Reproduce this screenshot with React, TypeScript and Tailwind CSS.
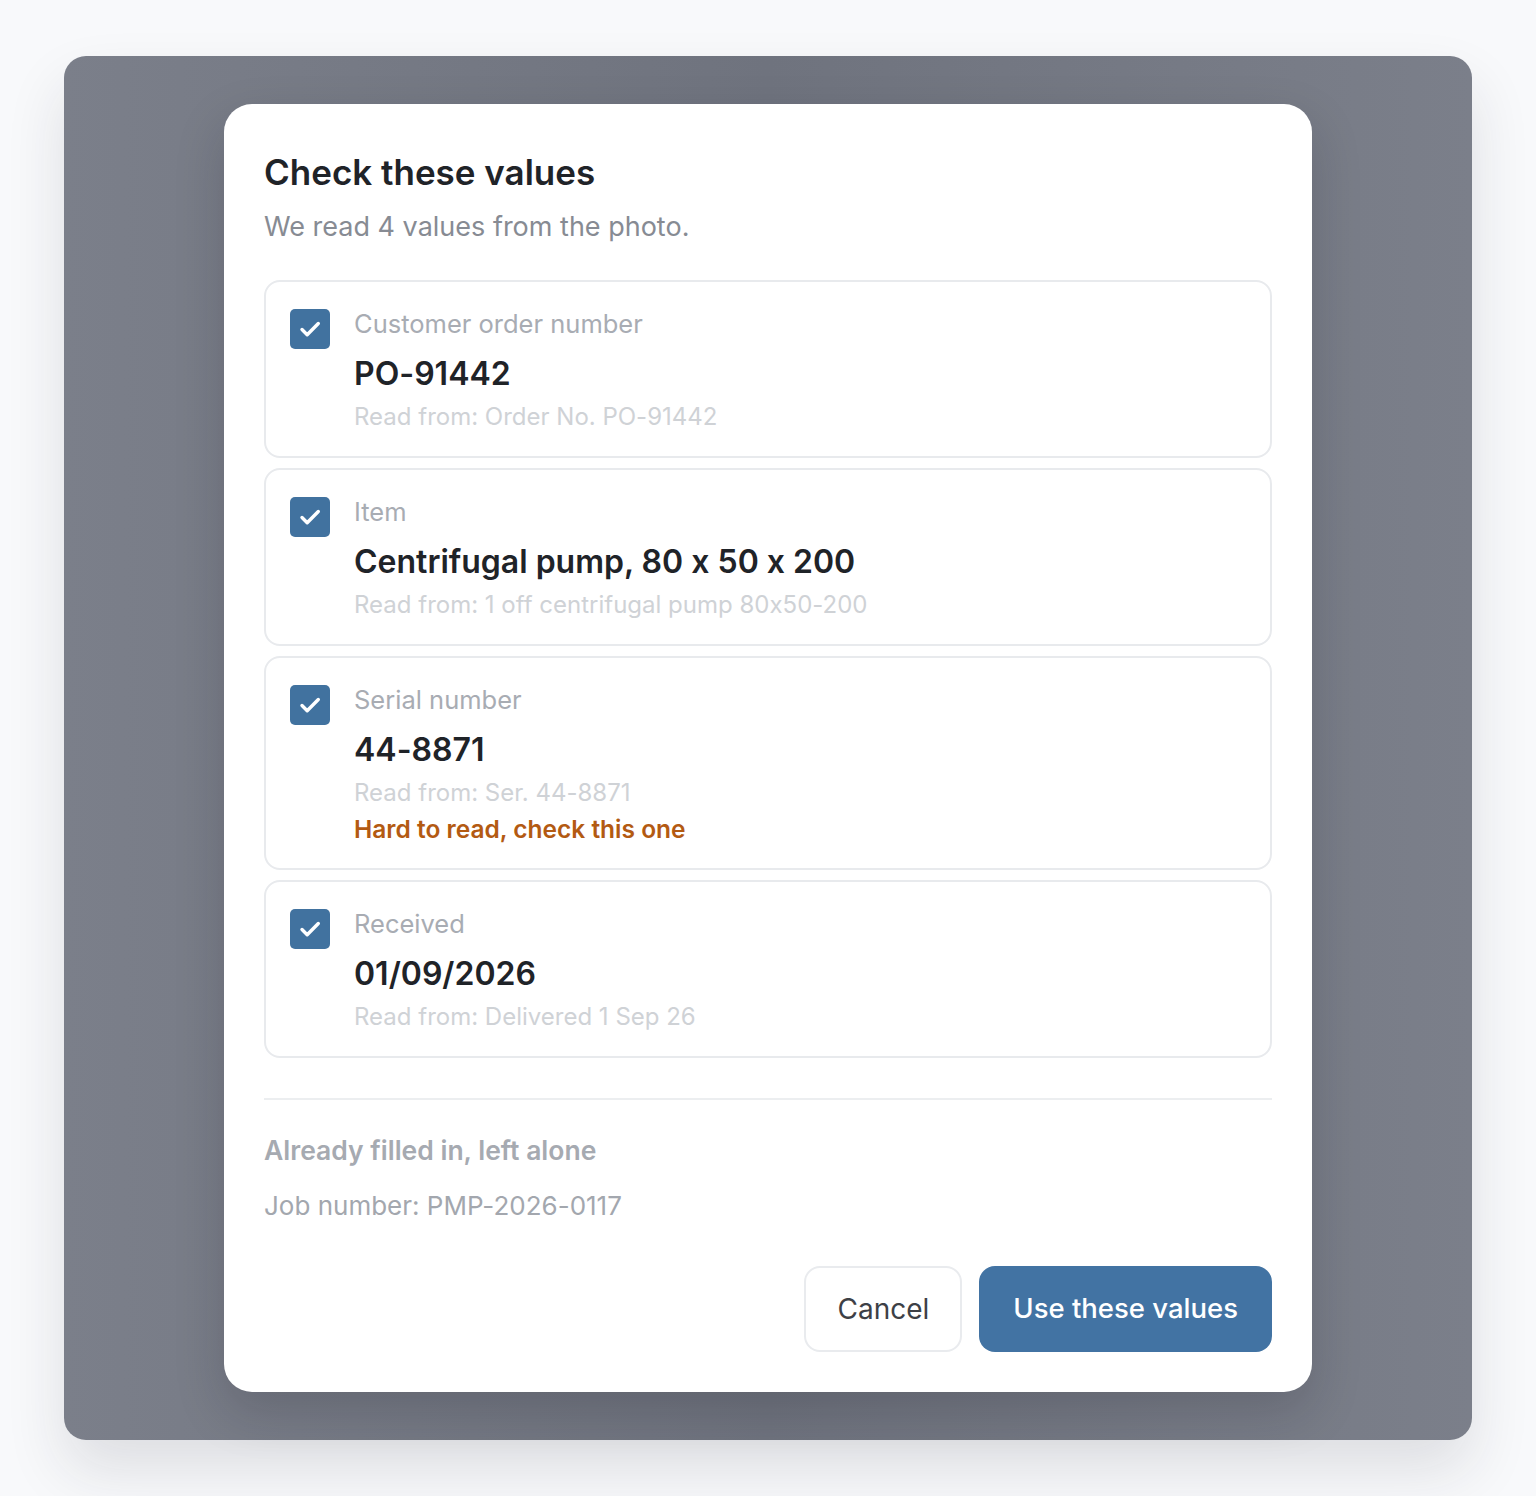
import React from 'react';

type Campo = {
  rotulo: string;
  valor: string;
  origem: string;
  aviso?: string;
};

const CAMPOS: Campo[] = [
  { rotulo: 'Customer order number', valor: 'PO-91442', origem: 'Read from: Order No. PO-91442' },
  { rotulo: 'Item', valor: 'Centrifugal pump, 80 x 50 x 200', origem: 'Read from: 1 off centrifugal pump 80x50-200' },
  { rotulo: 'Serial number', valor: '44-8871', origem: 'Read from: Ser. 44-8871', aviso: 'Hard to read, check this one' },
  { rotulo: 'Received', valor: '01/09/2026', origem: 'Read from: Delivered 1 Sep 26' },
];

const Caixa = () => (
  <div className="mt-[3px] h-10 w-10 shrink-0 rounded-[5px] bg-[#41729f]">
    <svg width="40" height="40" viewBox="0 0 40 40" fill="none">
      <path d="M12 20.5l5.2 5.2L28.3 14.5" stroke="white" strokeWidth="3.4" strokeLinecap="round" strokeLinejoin="round" />
    </svg>
  </div>
);

const LinhaCampo = ({ campo }: { campo: Campo }) => (
  <div className="flex gap-6 rounded-2xl border-2 border-[#e8eaed] bg-white px-6 pb-[22px] pt-6">
    <Caixa />
    <div className="flex flex-col">
      <div className="text-[25.5px] leading-[36px] text-[#a8acb3]">{campo.rotulo}</div>
      <div className="mt-3 text-[32px] font-semibold leading-[40px] text-[#1f2328]">{campo.valor}</div>
      <div className="mt-1.5 text-[24px] leading-[34px] text-[#cfd2d6]">{campo.origem}</div>
      {campo.aviso && (
        <div className="mt-0.5 text-[24.5px] font-semibold leading-[34px] text-[#b35a12]">{campo.aviso}</div>
      )}
    </div>
  </div>
);

export default function App() {
  return (
    <div className="min-h-[1496px] bg-[#f8f9fb] px-16 py-14 font-['Inter',sans-serif] [font-feature-settings:'calt'_0]">
      <div className="rounded-[22px] bg-gradient-to-r from-[#7b7f8a] via-[#6f737e] to-[#7b7f8a] px-40 py-12 shadow-[0_30px_60px_rgba(30,35,50,0.12)]">
        <div className="rounded-[28px] bg-white px-10 pb-10 pt-12 shadow-[0_20px_50px_rgba(20,24,36,0.18)]">
          <h2 className="text-[35px] font-semibold leading-[40px] text-[#1f2328]">Check these values</h2>
          <p className="mt-[17px] text-[27px] leading-[36px] text-[#878b93]">We read 4 values from the photo.</p>

          <div className="mt-[35px] flex flex-col gap-2.5">
            {CAMPOS.map((c) => (
              <LinhaCampo key={c.rotulo} campo={c} />
            ))}
          </div>

          <div className="mt-10 h-[2px] bg-[#eceef0]" />

          <div className="mt-8 text-[26.5px] font-semibold leading-[36px] text-[#a6aab1]">Already filled in, left alone</div>
          <div className="mt-5 text-[26px] leading-[36px] text-[#a3a7ae]">Job number: PMP-2026-0117</div>

          <div className="mt-[42px] flex justify-end gap-[17px]">
            <button className="h-[86px] rounded-2xl border-2 border-[#e9ebee] bg-white px-[31px] text-[28px] text-[#3d4046]">
              Cancel
            </button>
            <button className="h-[86px] rounded-2xl bg-[#4273a3] px-[34px] text-[27.5px] font-medium text-white">
              Use these values
            </button>
          </div>
        </div>
      </div>
    </div>
  );
}
